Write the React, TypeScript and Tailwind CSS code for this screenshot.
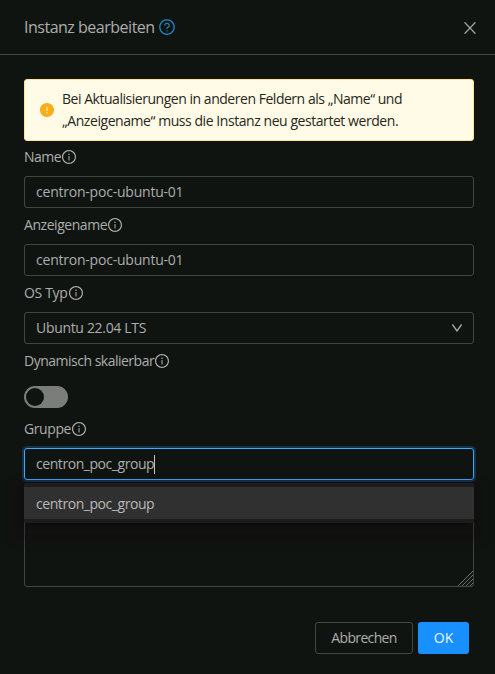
import React from "react";
import {
  AiOutlineInfoCircle,
  AiOutlineQuestionCircle,
  AiFillExclamationCircle,
} from "react-icons/ai";

function Label({ text, tracking }: { text: string; tracking: string }) {
  return (
    <div className="flex h-9 items-center pb-[2px]">
      <span className={tracking}>{text}</span>
      <AiOutlineInfoCircle className="size-4 shrink-0" />
    </div>
  );
}

const field =
  "flex h-8 items-center rounded-[3px] border border-[#434543] px-[11px]";

export default function App() {
  return (
    <div className="flex h-[674px] w-[495px] flex-col overflow-hidden bg-[#101411] font-['Open_Sans',sans-serif] text-[14px] leading-[22px] text-[#acadac]">
      <header className="flex h-[55px] shrink-0 items-center border-b border-[#434543] pr-[19px] pl-6">
        <h1 className="text-[16px] tracking-[-0.49px]">Instanz bearbeiten</h1>
        <AiOutlineQuestionCircle className="ml-[3px] size-[18px] text-[#1c88c7]" />
        <svg
          className="mt-px ml-auto size-3"
          viewBox="0 0 12 12"
          fill="none"
          stroke="currentColor"
          strokeWidth="1.3"
        >
          <path d="M.6.4 11.4 11.6M11.4.4.6 11.6" />
        </svg>
      </header>

      <main className="pt-6 pr-[21px] pl-6">
        <div className="flex h-[62px] items-center rounded-[3px] border border-[#ffe58f] bg-[#fffbe6] pl-[14px] text-[#272722]">
          <AiFillExclamationCircle className="size-4 shrink-0 text-[#faad14]" />
          <p className="ml-[7px] whitespace-nowrap">
            <span className="tracking-[-0.47px]">
              Bei Aktualisierungen in anderen Feldern als „Name“ und
            </span>
            <br />
            <span className="tracking-[-0.44px]">
              „Anzeigename“ muss die Instanz neu gestartet werden.
            </span>
          </p>
        </div>

        <div className="-mt-px">
          <Label text="Name" tracking="tracking-[-0.5px]" />
          <div className={field + " tracking-[-0.22px]"}>
            centron-poc-ubuntu-01
          </div>
          <Label text="Anzeigename" tracking="tracking-[-0.45px]" />
          <div className={field + " tracking-[-0.22px]"}>
            centron-poc-ubuntu-01
          </div>
          <Label text="OS Typ" tracking="tracking-[-0.33px]" />
          <div className={field + " justify-between"}>
            <span className="tracking-[-0.32px]">Ubuntu 22.04 LTS</span>
            <svg
              className="h-2 w-[10px]"
              viewBox="0 0 10 8"
              fill="none"
              stroke="currentColor"
              strokeWidth="1.3"
            >
              <path d="M.4.5 5 7 9.6.5" />
            </svg>
          </div>
          <Label text="Dynamisch skalierbar" tracking="tracking-[-0.5px]" />
          <div className="flex h-8 items-end pb-1">
            <div className="flex h-[22px] w-11 items-center rounded-full bg-[#7b7d7b] pl-[2px]">
              <div className="size-[18px] rounded-full bg-[#101411]" />
            </div>
          </div>
          <Label text="Gruppe" tracking="tracking-[-0.4px]" />
          <div className="relative tracking-[-0.44px]">
            <div className="flex h-8 items-center rounded-[3px] border border-[#40a9ff] px-[11px] shadow-[0_0_0_2px_#12324c]">
              <span>centron_poc_group</span>
              <span className="h-[19px] w-px bg-[#c4c5c4]" />
            </div>
            <div className="absolute top-[35px] left-0 z-10 w-full rounded-[2px] bg-[#1b1c1b] py-1 shadow-[0_3px_6px_-4px_#000,0_9px_8px_11px_rgba(20,8,17,0.25)]">
              <div className="flex h-8 items-center bg-[#303030] px-3 pt-px text-[#b9b9b9]">
                centron_poc_group
              </div>
            </div>
          </div>
          <div className="relative mt-9 h-[71px] rounded-[3px] border border-[#434543]">
            <svg
              className="absolute right-0 bottom-0 size-[15px] text-[#858685]"
              viewBox="0 0 15 15"
              fill="none"
              stroke="currentColor"
              strokeWidth="0.8"
            >
              <path d="M0 15 15 0M4 15 15 4M8 15 15 8M12 15 15 12" />
            </svg>
          </div>
        </div>
      </main>

      <footer className="mt-[35px] flex justify-end gap-[5px] pr-[26px]">
        <button className="h-8 w-[98px] rounded-[3px] border border-[#434543] tracking-[-0.66px]">
          Abbrechen
        </button>
        <button className="h-8 w-[51px] rounded-[3px] bg-[#1890ff] text-[#eef7ff]">
          OK
        </button>
      </footer>
    </div>
  );
}
